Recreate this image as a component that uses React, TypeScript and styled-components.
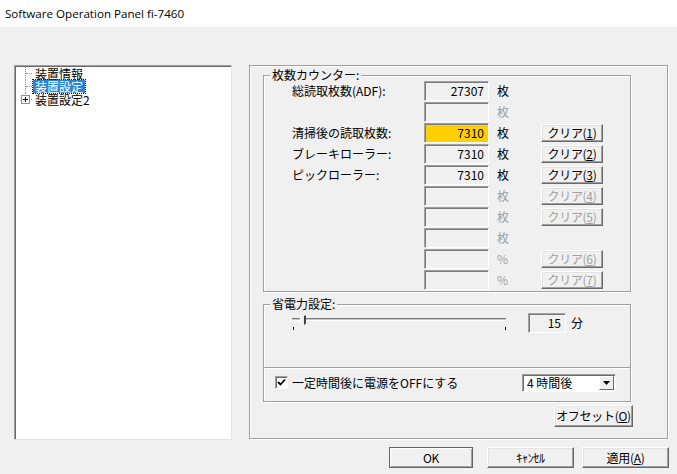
import React from 'react';
import styled, { createGlobalStyle } from 'styled-components';

const GlobalStyle = createGlobalStyle`
  html, body {
    margin: 0;
    padding: 0;
    background: #f0f0f0;
  }
  body {
    font-family: "Noto Sans CJK JP", "Liberation Sans", sans-serif;
    font-size: 12px;
    color: #000;
  }
  * {
    box-sizing: border-box;
  }
`;

const Window = styled.div`
  width: 677px;
  height: 474px;
  background: #f0f0f0;
  overflow: hidden;
`;

const TitleBar = styled.div`
  height: 27px;
  background: #fff;
  padding: 6px 0 0 5px;
  font-family: "Open Sans", "Noto Sans", sans-serif;
  font-size: 11.6px;
  line-height: 15px;
`;

const Body = styled.div`
  display: flex;
  gap: 17px;
  padding: 38px 0 0 14px;
`;

const Tree = styled.div`
  width: 218px;
  height: 375px;
  background: #fff;
  border: 1px solid;
  border-color: #a0a0a0 #e3e3e3 #e3e3e3 #a0a0a0;
  box-shadow: inset 1px 1px 0 #696969;
  padding-top: 1px;
`;

const TreeRow = styled.div`
  display: flex;
  align-items: center;
  height: 13px;
`;

const Connector = styled.div<{ $last?: boolean }>`
  position: relative;
  width: 18px;
  height: 13px;
  flex: none;

  &::before {
    content: '';
    position: absolute;
    left: 10px;
    top: 0;
    height: ${(p) => (p.$last ? '3px' : '13px')};
    border-left: 1px dotted #8c8c8c;
  }

  &::after {
    content: '';
    position: absolute;
    left: 11px;
    top: 6px;
    width: 6px;
    border-top: 1px dotted #8c8c8c;
  }
`;

const PlusBox = styled.span`
  position: absolute;
  left: 6px;
  top: 2px;
  width: 9px;
  height: 9px;
  border: 1px solid #919191;
  background: #fff;
  z-index: 1;

  &::before {
    content: '';
    position: absolute;
    left: 1px;
    top: 3px;
    width: 5px;
    height: 1px;
    background: #000;
  }

  &::after {
    content: '';
    position: absolute;
    left: 3px;
    top: 1px;
    width: 1px;
    height: 5px;
    background: #000;
  }
`;

const TreeLabel = styled.span<{ $selected?: boolean }>`
  display: block;
  height: 13px;
  line-height: 13px;
  padding: 0 2px;
  white-space: nowrap;
  background: ${(p) => (p.$selected ? '#2a84d6' : 'transparent')};
  color: ${(p) => (p.$selected ? '#fff' : '#000')};
  outline: ${(p) => (p.$selected ? '1px dotted #1a1a1a' : 'none')};
`;

const Frame = styled.div`
  width: 419px;
  height: 374px;
  border: 1px solid #a0a0a0;
  box-shadow: inset 1px 1px 0 #fff, 1px 1px 0 #fff;
  padding: 9px 0 0 13px;
`;

const FrameInner = styled.div`
  width: 370px;
  display: flex;
  flex-direction: column;
`;

const Group = styled.div<{ $top?: number }>`
  position: relative;
  width: 368px;
  margin-top: ${(p) => p.$top ?? 0}px;
  border: 1px solid #a0a0a0;
  box-shadow: inset 1px 1px 0 #fff, 1px 1px 0 #fff;
`;

const Legend = styled.span`
  position: absolute;
  left: 6px;
  top: -8px;
  padding: 0 2px;
  background: #f0f0f0;
  line-height: 14px;
`;

const CounterGrid = styled.div`
  display: grid;
  grid-template-columns: 132px 65px 52px 62px;
  grid-auto-rows: 20px;
  row-gap: 1px;
  align-items: center;
  padding: 5px 0 1px 28px;
`;

const RowLabel = styled.span`
  line-height: 14px;
  white-space: nowrap;
`;

const Field = styled.div<{ $highlight?: boolean; $w?: number }>`
  width: ${(p) => p.$w ?? 65}px;
  height: 20px;
  background: ${(p) => (p.$highlight ? '#ffd000' : '#f0f0f0')};
  border: 1px solid;
  border-color: #a0a0a0 #fff #fff #a0a0a0;
  box-shadow: inset 1px 1px 0 #7a7a7a;
  text-align: right;
  padding-right: 4px;
  line-height: 18px;
`;

const Unit = styled.span<{ $disabled?: boolean }>`
  padding-left: 8px;
  line-height: 14px;
  color: ${(p) => (p.$disabled ? '#a0a0a0' : '#000')};
`;

const Button = styled.button<{ $w: number; $h: number; $disabled?: boolean; $default?: boolean }>`
  width: ${(p) => p.$w}px;
  height: ${(p) => p.$h}px;
  padding: 0;
  margin: 0;
  font-family: inherit;
  font-size: 12px;
  line-height: 14px;
  white-space: nowrap;
  letter-spacing: -0.3px;
  background: #f0f0f0;
  color: ${(p) => (p.$disabled ? '#a0a0a0' : '#000')};
  border: 1px solid;
  border-color: ${(p) => (p.$default ? '#646464' : '#fff #696969 #696969 #fff')};
  box-shadow: ${(p) =>
    p.$default
      ? 'inset 1px 1px 0 #fff, inset -1px -1px 0 #a0a0a0'
      : 'inset -1px -1px 0 #a0a0a0, inset 1px 1px 0 #e3e3e3'};
  cursor: default;
`;

const ClearCell = styled.div`
  display: flex;
  align-items: center;
  height: 20px;
`;

const SliderArea = styled.div`
  height: 62px;
  display: flex;
  align-items: flex-start;
  padding: 8px 0 0 28px;
`;

const Slider = styled.div`
  position: relative;
  width: 214px;
  height: 20px;
  flex: none;
`;

const Track = styled.div`
  margin-top: 5px;
  height: 3px;
  border-top: 1px solid #7a7a7a;
  border-bottom: 1px solid #fff;
  background: #c8c8c8;
`;

const Thumb = styled.div`
  position: absolute;
  left: 8px;
  top: 2px;
  width: 6px;
  height: 11px;
  background: #f0f0f0;
  border-left: 1px solid #fff;
  border-right: 2px solid #404040;
  border-top: 1px solid #fff;
  clip-path: polygon(0 0, 100% 0, 100% 75%, 50% 100%, 0 75%);
`;

const Tick = styled.div<{ $x: number }>`
  position: absolute;
  left: ${(p) => p.$x}px;
  top: 14px;
  width: 1px;
  height: 3px;
  background: #000;
`;

const ValueField = styled(Field)`
  margin-left: 22px;
`;

const MinuteUnit = styled.span`
  margin-left: 5px;
  line-height: 20px;
`;

const CheckRow = styled.div`
  height: 34px;
  display: flex;
  align-items: center;
  padding: 0 14px 4px 11px;
  border-top: 1px solid #a0a0a0;
  box-shadow: inset 0 1px 0 #fff;
`;

const CheckBox = styled.span`
  width: 13px;
  height: 13px;
  background: #fff;
  border: 1px solid;
  border-color: #a0a0a0 #fff #fff #a0a0a0;
  box-shadow: inset 1px 1px 0 #696969;
  display: flex;
  align-items: center;
  justify-content: center;
  flex: none;
`;

const CheckText = styled.span`
  margin-left: 4px;
  line-height: 14px;
`;

const Dropdown = styled.div`
  margin-left: auto;
  width: 94px;
  height: 18px;
  background: #fff;
  border: 1px solid;
  border-color: #a0a0a0 #fff #fff #a0a0a0;
  box-shadow: inset 1px 1px 0 #696969;
  display: flex;
  align-items: center;
  padding: 1px 1px 1px 4px;
`;

const DropText = styled.span`
  flex: 1;
  line-height: 14px;
  white-space: nowrap;
`;

const DropArrow = styled.span`
  width: 15px;
  height: 14px;
  background: #f0f0f0;
  border: 1px solid;
  border-color: #fff #696969 #696969 #fff;
  display: flex;
  align-items: center;
  justify-content: center;
`;

const OffsetRow = styled.div`
  display: flex;
  justify-content: flex-end;
  margin-top: 3px;
`;

const Footer = styled.div`
  display: flex;
  justify-content: flex-end;
  padding: 7px 8px 0 0;
`;

const FooterButton = styled(Button)<{ $after?: number }>`
  margin-right: ${(p) => p.$after ?? 0}px;
`;

type Row = {
  label?: string;
  value?: string;
  unit: string;
  active: boolean;
  highlight?: boolean;
  clear?: string;
};

const rows: Row[] = [
  { label: '総読取枚数(ADF):', value: '27307', unit: '枚', active: true },
  { unit: '枚', active: false },
  { label: '清掃後の読取枚数:', value: '7310', unit: '枚', active: true, highlight: true, clear: '1' },
  { label: 'ブレーキローラー:', value: '7310', unit: '枚', active: true, clear: '2' },
  { label: 'ピックローラー:', value: '7310', unit: '枚', active: true, clear: '3' },
  { unit: '枚', active: false, clear: '4' },
  { unit: '枚', active: false, clear: '5' },
  { unit: '枚', active: false },
  { unit: '%', active: false, clear: '6' },
  { unit: '%', active: false, clear: '7' },
];

export default function App() {
  return (
    <Window>
      <GlobalStyle />
      <TitleBar>Software Operation Panel fi-7460</TitleBar>
      <Body>
        <Tree>
          <TreeRow>
            <Connector />
            <TreeLabel>装置情報</TreeLabel>
          </TreeRow>
          <TreeRow>
            <Connector />
            <TreeLabel $selected>装置設定</TreeLabel>
          </TreeRow>
          <TreeRow>
            <Connector $last>
              <PlusBox />
            </Connector>
            <TreeLabel>装置設定2</TreeLabel>
          </TreeRow>
        </Tree>
        <Frame>
          <FrameInner>
            <Group>
              <Legend>枚数カウンター:</Legend>
              <CounterGrid>
                {rows.map((r, i) => (
                  <React.Fragment key={i}>
                    <RowLabel>{r.label ?? ''}</RowLabel>
                    <Field $highlight={r.highlight}>{r.value ?? ''}</Field>
                    <Unit $disabled={!r.active}>{r.unit}</Unit>
                    <ClearCell>
                      {r.clear && (
                        <Button $w={62} $h={18} $disabled={!r.active}>
                          クリア(<u>{r.clear}</u>)
                        </Button>
                      )}
                    </ClearCell>
                  </React.Fragment>
                ))}
              </CounterGrid>
            </Group>
            <Group $top={12}>
              <Legend>省電力設定:</Legend>
              <SliderArea>
                <Slider>
                  <Track />
                  <Thumb />
                  <Tick $x={1} />
                  <Tick $x={213} />
                </Slider>
                <ValueField $w={38}>15</ValueField>
                <MinuteUnit>分</MinuteUnit>
              </SliderArea>
              <CheckRow>
                <CheckBox>
                  <svg width="9" height="9" viewBox="0 0 9 9">
                    <path d="M1 4 L3.5 6.5 L8 1.5" fill="none" stroke="#000" strokeWidth="1.8" />
                  </svg>
                </CheckBox>
                <CheckText>一定時間後に電源をOFFにする</CheckText>
                <Dropdown>
                  <DropText>4 時間後</DropText>
                  <DropArrow>
                    <svg width="7" height="4" viewBox="0 0 7 4">
                      <path d="M0 0 H7 L3.5 4 Z" fill="#000" />
                    </svg>
                  </DropArrow>
                </Dropdown>
              </CheckRow>
            </Group>
            <OffsetRow>
              <Button $w={79} $h={22}>
                オフセット(<u>O</u>)
              </Button>
            </OffsetRow>
          </FrameInner>
        </Frame>
      </Body>
      <Footer>
        <FooterButton $w={84} $h={21} $default $after={14}>
          OK
        </FooterButton>
        <FooterButton $w={87} $h={21} $after={8}>
          ｷｬﾝｾﾙ
        </FooterButton>
        <FooterButton $w={87} $h={21}>
          適用(<u>A</u>)
        </FooterButton>
      </Footer>
    </Window>
  );
}
